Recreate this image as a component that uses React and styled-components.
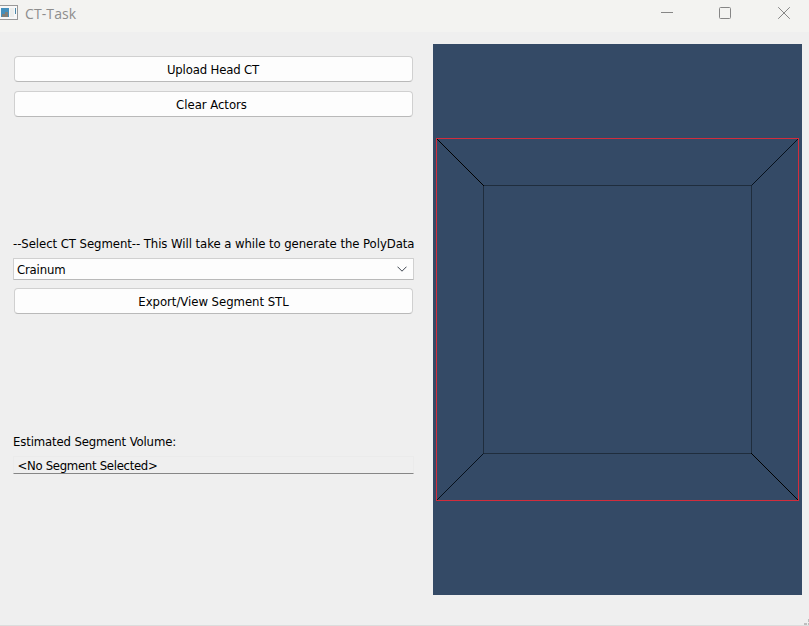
import React from 'react';
import styled, { createGlobalStyle } from 'styled-components';

const GlobalStyle = createGlobalStyle`
  * { box-sizing: border-box; }
  body { margin: 0; background: #efefef; overflow: hidden; }
`;

const Window = styled.div`
  display: flex;
  flex-direction: column;
  width: 809px;
  height: 626px;
  background: #efefef;
  border-bottom: 1px solid #dcdcdc;
  color: #000;
  font: 13px/16px 'DejaVu Sans Condensed', 'DejaVu Sans', sans-serif;
  font-stretch: condensed;
  white-space: nowrap;
`;

const TitleBar = styled.header`
  display: flex;
  flex: none;
  height: 32px;
  background: #f3f3f1;
`;

const AppIcon = styled.svg`
  flex: none;
  width: 19px;
  height: 16px;
  margin: 5px 6px 0 0;
`;

const Title = styled.h1`
  flex: 1;
  margin: 3px 0 0;
  color: #8d8d8d;
  font: 400 14px/21px 'Open Sans', sans-serif;
  letter-spacing: 0.1px;
`;

const WindowControls = styled.svg`
  flex: none;
  width: 169px;
  height: 32px;
`;

const Content = styled.main`
  display: flex;
  flex: 1;
  gap: 19px;
  padding: 12px 7px 0 13px;
`;

const Panel = styled.section`
  display: flex;
  flex-direction: column;
  width: 401px;
  padding-top: 12px;
`;

const Group = styled.div`
  display: flex;
  flex-direction: column;
  height: ${(p) => p.$height}px;
`;

const Caption = styled.span`
  letter-spacing: ${(p) => p.$spacing}px;
`;

const Label = styled.label`
  height: 16px;
  margin-bottom: ${(p) => p.$gap}px;
`;

const PushButton = styled.button`
  height: 26px;
  margin: 0 1px 9px;
  padding: 1px ${(p) => p.$inset || 0}px 0 0;
  border: 1px solid #d0d0d0;
  border-bottom-color: #b9b9b9;
  border-radius: 4px;
  background: #fdfdfd;
  color: inherit;
  font: inherit;
  font-stretch: inherit;
`;

const ComboBox = styled.div`
  display: flex;
  align-items: center;
  justify-content: space-between;
  height: 22px;
  margin-bottom: 8px;
  padding: 0 6px 0 3px;
  border: 1px solid #d0d0d0;
  border-bottom-color: #b9b9b9;
  border-radius: 1px;
  background: #fdfdfd;
  line-height: 22px;
`;

const ComboValue = styled(Caption)`
  height: 20px;
`;

const Chevron = styled.svg`
  width: 10px;
  height: 6px;
`;

const ReadOnlyField = styled.output`
  height: 18px;
  padding-left: 3.5px;
  border: 1px solid #ebebeb;
  border-bottom-color: #868686;
  line-height: 18px;
`;

const Viewport = styled.section`
  width: 369px;
  height: 551px;
  background: #344a66;
`;

const Scene = styled.svg`
  display: block;
  width: 369px;
  height: 551px;
`;

const Footer = styled.footer`
  display: flex;
  justify-content: flex-end;
  align-items: flex-end;
  height: 30px;
`;

const SizeGrip = styled.svg`
  width: 5px;
  height: 6px;
`;

export default function App() {
  return (
    <>
      <GlobalStyle />
      <Window>
        <TitleBar>
          <AppIcon viewBox="0 0 19 16" shapeRendering="crispEdges">
            <path d="M0 .5H17.5V14.5H0" fill="#f8f8f8" stroke="#999" />
            <path d="M1 3H9V12H1Z" fill="#4490bd" />
            <path d="M2 9H5V7H8V12H2Z" fill="#817f78" />
            <path d="M10 3H14V12H10Z" fill="#eceeed" />
            <path d="M15 3H16V9H15Z" fill="#4c88aa" />
          </AppIcon>
          <Title>CT-Task</Title>
          <WindowControls viewBox="0 0 169 32" fill="none" stroke="#868686">
            <path d="M21 12.5H33" />
            <rect x="79.5" y="7.5" width="11" height="11" rx="1" />
            <path d="M138.2 7.2L149.8 18.8M149.8 7.2L138.2 18.8" />
          </WindowControls>
        </TitleBar>
        <Content>
          <Panel>
            <Group $height={180}>
              <PushButton $inset={1}><Caption $spacing={-0.16}>Upload Head CT</Caption></PushButton>
              <PushButton $inset={4}><Caption $spacing={-0.03}>Clear Actors</Caption></PushButton>
            </Group>
            <Group $height={198}>
              <Label $gap={6}><Caption $spacing={-0.06}>--Select CT Segment-- This Will take a while to generate the PolyData</Caption></Label>
              <ComboBox>
                <ComboValue $spacing={-0.18}>Crainum</ComboValue>
                <Chevron viewBox="0 0 10 6" fill="none" stroke="#3f4650">
                  <path d="M.5 .7L5 5.2L9.5 .7" />
                </Chevron>
              </ComboBox>
              <PushButton><Caption $spacing={-0.03}>Export/View Segment STL</Caption></PushButton>
            </Group>
            <Label $gap={6}><Caption $spacing={-0.14}>Estimated Segment Volume:</Caption></Label>
            <ReadOnlyField><Caption $spacing={-0.3}>&lt;No Segment Selected&gt;</Caption></ReadOnlyField>
          </Panel>
          <Viewport>
            <Scene viewBox="0 0 369 551" fill="none">
              <rect x="50.5" y="141.5" width="268" height="268" stroke="#1f2d3d" />
              <g stroke="#000" shapeRendering="crispEdges" strokeWidth="1.2">
                <path d="M4 95L51 142M318.5 409.5L365 456" />
              </g>
              <path d="M318.5 141.5L365 95M50.5 409.5L4 456" stroke="#06101c" strokeWidth="1" />
              <rect x="3.5" y="94.5" width="362" height="362" stroke="#d32d3c" />
            </Scene>
          </Viewport>
        </Content>
        <Footer>
          <SizeGrip viewBox="0 0 5 6" fill="#bdbdbd" shapeRendering="crispEdges">
            <path d="M0 4H3V6H0ZM4 4H5V6H4ZM4 0H5V3H4Z" />
          </SizeGrip>
        </Footer>
      </Window>
    </>
  );
}
